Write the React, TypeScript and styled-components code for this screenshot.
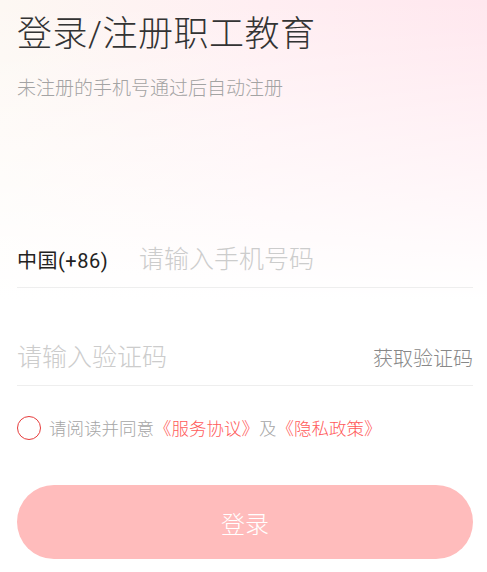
import React, { useState } from "react";
import styled, { createGlobalStyle } from "styled-components";

const GlobalStyle = createGlobalStyle`
  html, body {
    margin: 0;
    padding: 0;
    background: #fff;
  }
  body {
    font-family: Roboto, "Noto Sans CJK SC", sans-serif;
  }
  * {
    box-sizing: border-box;
  }
`;

const App: React.FC = () => {
  const [phone, setPhone] = useState("");
  const [code, setCode] = useState("");
  const [agreed, setAgreed] = useState(false);

  return (
    <Page>
      <GlobalStyle />
      <Header>
        <Title>登录/注册职工教育</Title>
        <Subtitle>未注册的手机号通过后自动注册</Subtitle>
      </Header>
      <Form>
        <FieldRow>
          <AreaCode>中国(+86)</AreaCode>
          <Input
            value={phone}
            placeholder="请输入手机号码"
            type="tel"
            onChange={e => setPhone(e.target.value)}
          />
        </FieldRow>
        <FieldRow spaced>
          <Input
            value={code}
            placeholder="请输入验证码"
            type="text"
            onChange={e => setCode(e.target.value)}
          />
          <CodeButton>获取验证码</CodeButton>
        </FieldRow>
        <Agreement>
          <Radio checked={agreed} onClick={() => setAgreed(!agreed)} />
          <span>请阅读并同意</span>
          <Link>《服务协议》</Link>
          <span>及</span>
          <Link>《隐私政策》</Link>
        </Agreement>
        <LoginButton disabled={!agreed}>登录</LoginButton>
      </Form>
    </Page>
  );
};

const Page = styled.div`
  min-height: 572px;
  padding: 0 14px 0 17px;
  background:
    linear-gradient(to bottom, rgba(255, 255, 255, 0) 0%, #ffffff 300px),
    linear-gradient(to right, #fdf8f3 0%, #ffeef2 55%, #ffe7ee 100%);
`;

const Header = styled.div`
  display: flex;
  flex-direction: column;
  padding-top: 14px;
`;

const Title = styled.h1`
  margin: 0;
  font-size: 35px;
  line-height: 42px;
  font-weight: 300;
  letter-spacing: 0.5px;
  color: #333;
`;

const Subtitle = styled.p`
  margin: 19px 0 0;
  font-size: 19px;
  line-height: 27px;
  font-weight: 300;
  color: #a3a3a3;
`;

const Form = styled.div`
  display: flex;
  flex-direction: column;
  margin-top: 130px;
`;

const FieldRow = styled.div<{ spaced?: boolean }>`
  display: flex;
  align-items: center;
  height: 56px;
  margin-top: ${p => (p.spaced ? "42px" : "0")};
  border-bottom: 1px solid #eeeeee;
`;

const AreaCode = styled.span`
  flex-shrink: 0;
  width: 122px;
  font-size: 20px;
  font-weight: 400;
  letter-spacing: 0.5px;
  color: #222;
`;

const Input = styled.input`
  flex: 1;
  min-width: 0;
  border: none;
  outline: none;
  background: transparent;
  padding: 0;
  font-family: inherit;
  font-size: 25px;
  font-weight: 300;
  color: #333;

  &::placeholder {
    color: #cccccc;
  }
`;

const CodeButton = styled.span`
  flex-shrink: 0;
  font-size: 20px;
  font-weight: 300;
  color: #888;
`;

const Agreement = styled.div`
  display: flex;
  align-items: center;
  margin-top: 29px;
  font-size: 17.5px;
  font-weight: 300;
  color: #a6a6a6;
`;

const Radio = styled.span<{ checked: boolean }>`
  width: 24px;
  height: 24px;
  margin-right: 8px;
  border-radius: 50%;
  border: 1.5px solid #e63b3b;
  background: ${p => (p.checked ? "#e63b3b" : "transparent")};
  flex-shrink: 0;
`;

const Link = styled.span`
  color: #ff5a5a;
`;

const LoginButton = styled.button`
  margin-top: 45px;
  height: 74px;
  border: none;
  border-radius: 37px;
  background: #ffbcbc;
  color: #fff;
  font-family: inherit;
  font-size: 24px;
  font-weight: 300;
`;

export default App;
